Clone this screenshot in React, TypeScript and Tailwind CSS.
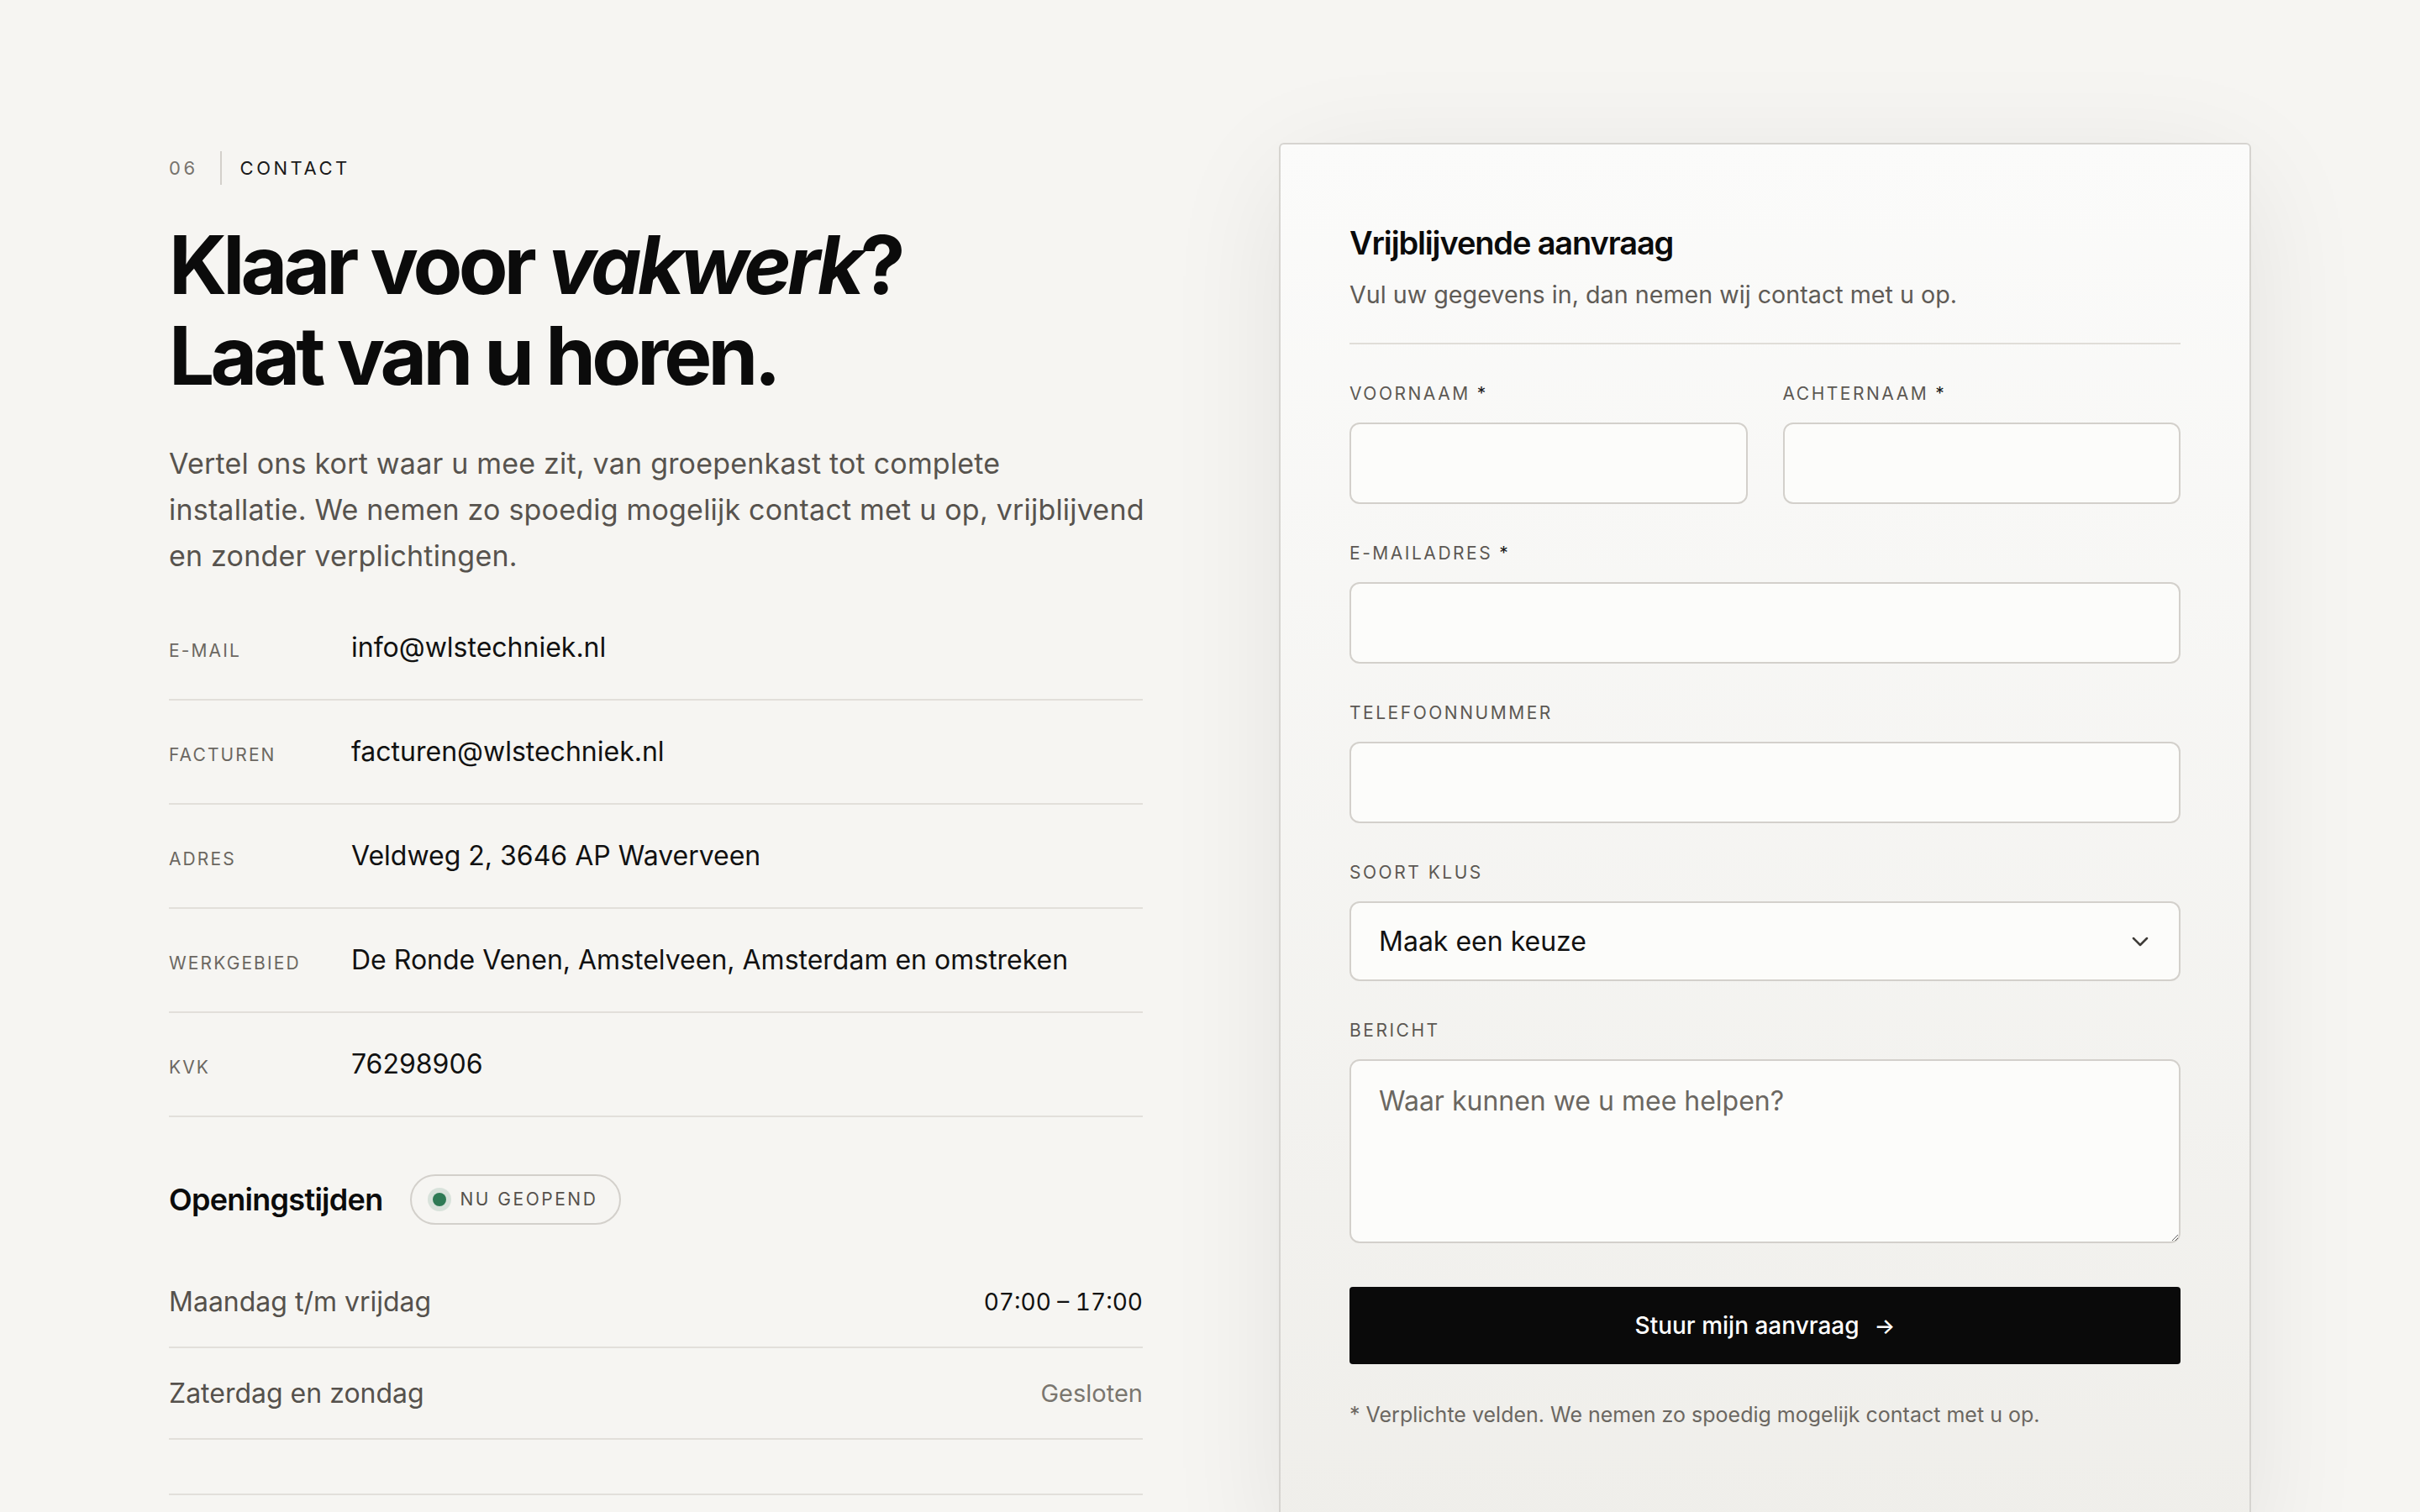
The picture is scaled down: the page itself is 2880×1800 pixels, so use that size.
import { ChevronDown } from "lucide-react";

// Contact section – two columns: info on the left, request form in a card on the right.

const contactRows = [
  { label: "E-mail", value: "info@wlstechniek.nl" },
  { label: "Facturen", value: "facturen@wlstechniek.nl" },
  { label: "Adres", value: "Veldweg 2, 3646 AP Waverveen" },
  { label: "Werkgebied", value: "De Ronde Venen, Amstelveen, Amsterdam en omstreken" },
  { label: "KvK", value: "76298906" },
];

const hours = [
  { day: "Maandag t/m vrijdag", time: "07:00 – 17:00", open: true },
  { day: "Zaterdag en zondag", time: "Gesloten", open: false },
];

function FieldLabel({ children, required }: { children: string; required?: boolean }) {
  return (
    <label className="mb-[20px] block text-[21px] leading-[28px] uppercase tracking-[0.12em] text-[#5c5853]">
      {children}
      {required && <span className="ml-[8px] text-[#1a1a1a]">*</span>}
    </label>
  );
}

const inputCls =
  "block h-[97px] w-full rounded-[12px] border-2 border-[#d3d0cb] bg-[#fcfcfa] px-[33px] text-[32px] text-[#111] outline-none";

export default function App() {
  return (
    <div className="min-h-screen bg-[#f6f5f2] font-['Inter',sans-serif] text-[#0b0b0b]">
      <div className="mx-auto grid w-[2478px] grid-cols-[1159px_1157px] items-start gap-x-[162px] pt-[170px]">
        {/* Left: intro + contact details */}
        <div className="mt-[10px]">
          <div className="flex h-[40px] items-center text-[22px] uppercase tracking-[0.16em]">
            <span className="text-[#77736d]">06</span>
            <span className="ml-[26px] mr-[22px] h-[40px] w-[2px] bg-[#d3d0cb]" />
            <span className="text-[#1a1a1a]">Contact</span>
          </div>

          <h1 className="mt-[41px] whitespace-nowrap text-[96px] font-bold leading-[108px] tracking-[-0.05em]">
            Klaar voor <em className="font-bold italic">vakwerk</em>?
            <br />
            Laat van u horen.
          </h1>

          <p className="mt-[47px] whitespace-nowrap text-[34px] leading-[55px] tracking-[0.006em] text-[#57534e]">
            Vertel ons kort waar u mee zit, van groepenkast tot complete
            <br />
            installatie. We nemen zo spoedig mogelijk contact met u op, vrijblijvend
            <br />
            en zonder verplichtingen.
          </p>

          <div className="mt-[21px]">
            {contactRows.map((row) => (
              <div key={row.label} className="flex h-[124px] items-center border-b-2 border-[#e2dfda]">
                <div className="flex w-full items-baseline">
                  <span className="w-[217px] shrink-0 text-[21px] uppercase tracking-[0.1em] text-[#6b6761]">
                    {row.label}
                  </span>
                  <span className="text-[32px] text-[#111]">{row.value}</span>
                </div>
              </div>
            ))}
          </div>

          <div className="mt-[68px] flex h-[60px] items-center gap-[33px]">
            <h3 className="text-[36px] font-semibold tracking-[-0.02em] text-[#0b0b0b]">Openingstijden</h3>
            <span className="flex h-[60px] items-center gap-[16px] rounded-full border-2 border-[#d3d0cb] pl-[25px] pr-[26px]">
              <span className="h-[16px] w-[16px] rounded-full bg-[#2e7a55] ring-[6px] ring-[#2e7a55]/15" />
              <span className="text-[21px] uppercase tracking-[0.12em] text-[#55514c]">Nu geopend</span>
            </span>
          </div>

          <div className="mt-[38px]">
            {hours.map((h) => (
              <div key={h.day} className="flex h-[109px] items-center justify-between border-b-2 border-[#e2dfda]">
                <span className="text-[32px] text-[#55514c]">{h.day}</span>
                <span className={`tabular-nums ${h.open ? "text-[28px] text-[#111]" : "text-[29px] text-[#7a766f]"}`}>
                  {h.time}
                </span>
              </div>
            ))}
          </div>

          <div className="mt-[64px] h-[120px] border-t-2 border-[#e2dfda]" />
        </div>

        {/* Right: request form */}
        <div className="rounded-[6px] border-2 border-[#d6d4d0] bg-gradient-to-b from-[#fbfbfa] to-[#efeeea] px-[82px] pt-[94px] pb-[140px] shadow-[0_30px_140px_-10px_rgba(0,0,0,0.09)]">
          <h2 className="text-[38px] font-semibold leading-[46px] tracking-[-0.03em] text-[#0b0b0b]">
            Vrijblijvende aanvraag
          </h2>
          <p className="mt-[18px] text-[28.7px] leading-[42px] text-[#5f5b56]">
            Vul uw gegevens in, dan nemen wij contact met u op.
          </p>
          <div className="mt-[36px] h-[2px] bg-[#e0ddd8]" />

          <form className="mt-[45px] flex flex-col gap-[45px]" onSubmit={(e) => e.preventDefault()}>
            <div className="grid grid-cols-2 gap-x-[42px]">
              <div>
                <FieldLabel required>Voornaam</FieldLabel>
                <input className={inputCls} />
              </div>
              <div>
                <FieldLabel required>Achternaam</FieldLabel>
                <input className={inputCls} />
              </div>
            </div>

            <div>
              <FieldLabel required>E-mailadres</FieldLabel>
              <input type="email" className={inputCls} />
            </div>

            <div>
              <FieldLabel>Telefoonnummer</FieldLabel>
              <input type="tel" className={inputCls} />
            </div>

            <div>
              <FieldLabel>Soort klus</FieldLabel>
              <div className="relative">
                <select className="block h-[95px] w-full appearance-none rounded-[12px] border-2 border-[#d3d0cb] bg-[#fcfcfa] px-[33px] text-[32px] text-[#111] outline-none">
                  <option>Maak een keuze</option>
                </select>
                <ChevronDown
                  className="pointer-events-none absolute right-[32px] top-1/2 h-[32px] w-[32px] -translate-y-1/2 text-[#3f3c38]"
                  strokeWidth={1.9}
                />
              </div>
            </div>

            <div>
              <FieldLabel>Bericht</FieldLabel>
              <textarea
                placeholder="Waar kunnen we u mee helpen?"
                className="block h-[219px] w-full resize-y rounded-[12px] border-2 border-[#d3d0cb] bg-[#fcfcfa] px-[33px] pt-[24px] text-[32px] leading-[48px] text-[#111] outline-none placeholder:text-[#6b6761]"
              />
            </div>

            <div className="mt-[7px]">
              <button
                type="submit"
                className="flex h-[92px] w-full items-center justify-center gap-[18px] rounded-[4px] bg-[#0a0a0a] text-[28px] font-medium text-white"
              >
                Stuur mijn aanvraag <span className="text-[26px]">→</span>
              </button>
              <p className="mt-[42px] text-[25px] text-[#6b6761]">
                * Verplichte velden. We nemen zo spoedig mogelijk contact met u op.
              </p>
            </div>
          </form>
        </div>
      </div>
    </div>
  );
}
